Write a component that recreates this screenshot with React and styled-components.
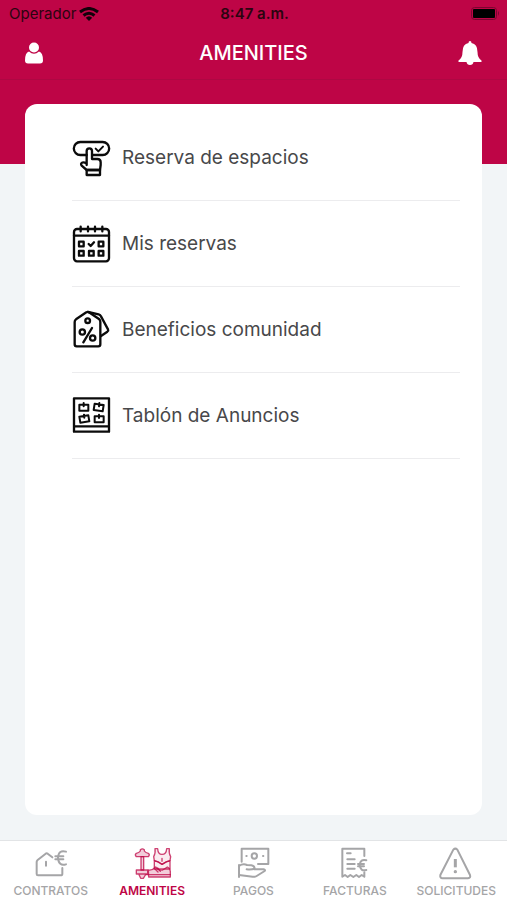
import React, { useState } from 'react';
import styled, { createGlobalStyle } from 'styled-components';

const RED = '#be0546';
const GREY = '#a5a5a7';

const GlobalStyle = createGlobalStyle`
    * {
        box-sizing: border-box;
    }
    body {
        margin: 0;
        font-family: Inter, "Liberation Sans", sans-serif;
        background-color: #f2f5f7;
    }
    button {
        border: 0;
        padding: 0;
        background: none;
        font: inherit;
        color: inherit;
        cursor: pointer;
    }
`;

const Screen = styled.div`
    display: flex;
    flex-direction: column;
    min-height: 100vh;
`;

const Header = styled.header`
    background-color: ${RED};
    border-bottom: 1px solid #ae0843;
`;

const StatusBar = styled.div`
    display: grid;
    grid-template-columns: 1fr auto 1fr;
    align-items: center;
    height: 27px;
    padding: 0 7px 0 9px;
    font-size: 15px;
    line-height: 18px;
    color: #2b0410;
`;

const Carrier = styled.span`
    display: flex;
    align-items: center;
    gap: 3px;
`;

const Clock = styled.time`
    font-weight: 600;
`;

const Battery = styled.svg`
    justify-self: end;
`;

const TitleBar = styled.div`
    display: grid;
    grid-template-columns: 1fr auto 1fr;
    align-items: center;
    height: 52px;
    padding: 0 24px;
`;

const Title = styled.h1`
    margin: 0;
    font-size: 20px;
    font-weight: 500;
    color: #fff;
`;

const IconButton = styled.button`
    display: flex;
    justify-self: ${({ side }) => side};
`;

const Main = styled.main`
    display: flex;
    flex: 1;
    padding: 24px 25px 25px;
    background: linear-gradient(${RED} 84px, #f2f5f7 84px);
`;

const Card = styled.section`
    flex: 1;
    padding: 11px 22px 11px 47px;
    border-radius: 12px;
    background-color: #fff;
`;

const Menu = styled.ul`
    margin: 0;
    padding: 0;
    list-style: none;
`;

const MenuItem = styled.li`
    border-bottom: 1px solid #ececee;
`;

const MenuButton = styled.button`
    display: flex;
    align-items: center;
    gap: 10px;
    width: 100%;
    height: 85px;
    font-size: 19px;
    text-align: left;
    color: #48484a;
`;

const LineIcon = styled.svg`
    flex: none;
    fill: none;
    stroke: currentColor;
    stroke-linecap: round;
    stroke-linejoin: round;
`;

const MenuIcon = styled(LineIcon).attrs({ width: 40, height: 40, 'aria-hidden': true })`
    color: #0b0b0b;
    stroke-width: 7;
`;

const TabIcon = styled(LineIcon).attrs({ width: 40, height: 36, 'aria-hidden': true })`
    stroke-width: 6;
`;

const TabBar = styled.nav`
    display: grid;
    grid-template-columns: repeat(5, 1fr);
    height: 60px;
    border-top: 1px solid #e2e4e6;
    background-color: #fff;
`;

const Tab = styled.button`
    display: flex;
    flex-direction: column;
    align-items: center;
    gap: 2px;
    padding-top: 4px;
    font-size: 12px;
    line-height: 16px;
    font-weight: ${({ active }) => active ? 600 : 500};
    color: ${({ active }) => active ? RED : GREY};
`;

const ReserveIcon = () => (
    <MenuIcon viewBox="36 24 120 120">
        <path d="M80 75H61a19.5 19.5 0 0 1 0-39h67a19.5 19.5 0 0 1 0 39H97" />
        <path d="M107 56l8 8 14-14" strokeWidth="6" />
        <path d="M80 105V63a8 8 0 0 1 16 0v24h16q10 0 10 10v8l-2 15H80L65 107q-4-6 1-9 4-3 14 2" />
        <path d="M80 120h40v15H80z" />
    </MenuIcon>
);

const CalendarIcon = () => (
    <MenuIcon viewBox="36 27 120 120">
        <rect x="42" y="42" width="105" height="97" rx="9" />
        <path d="M42 62h105M62 35v14M84 35v14M105 35v14M127 35v14" />
        <path d="M57 80h14v14H57zM116 80h14v14h-14zM57 108h14v14H57zM87 108h14v14H87zM116 108h14v14h-14z" />
        <path d="M86 87l6 6 10-11" />
    </MenuIcon>
);

const TagsIcon = () => (
    <MenuIcon viewBox="36 30 120 120">
        <path d="M79 37q4-3 8 0l31 21q3 3 3 8v67q0 6-6 6H50q-6 0-6-6V66q0-5 4-8z" />
        <path d="M84 36l32 7q5 1 7 6l21 39q2 4-2 7l-19 13" />
        <circle cx="83" cy="62" r="7" />
        <circle cx="67" cy="96" r="8" />
        <circle cx="98" cy="114" r="8" />
        <path d="M96 84l-26 43" />
    </MenuIcon>
);

const BoardIcon = () => (
    <MenuIcon viewBox="36 33 120 120">
        <path d="M42 40h105v100H42zM42 124h105" />
        <g strokeWidth="6">
            <path d="M58 59h27v18H58zM71 54v10" />
            <path d="M104 56l27 4-3 19-27-4zM118 54l-1 10" />
            <path d="M58 95l27-4 3 18-27 4zM72 89l1 9" />
            <path d="M104 94h27v18h-27zM117 89v10" />
        </g>
    </MenuIcon>
);

const ContractsIcon = () => (
    <TabIcon viewBox="92 45 120 108">
        <path d="M156 82l-14-11q-3-2-6 0l-25 20q-2 2-2 5v36q0 4 4 4h68q5 0 5-5v-17M137 95v12" />
        <path d="M197 65q-22-7-24 18 2 27 24 20M165 79h24M165 88h24" />
    </TabIcon>
);

const AmenitiesIcon = () => (
    <TabIcon viewBox="66 30 120 108">
        <g fill={RED} fillOpacity="0.2" strokeWidth="4" strokeOpacity="0.75">
            <path d="M91 48v-4q6-5 12 0v4q3 5 12 7 6 4 0 10H79q-6-6 0-10 9-2 12-7z" />
            <path d="M93 65h8v40h-8z" />
            <path d="M79 105h34v12H79zM86 117h22l-8 13h-8z" />
            <path d="M135 41h8q1 17 13 17 13 0 14-17h8q-2 15 4 24l-2 12q-10 2-24 11-13-9-23-11l-2-12q6-9 4-24z" fillOpacity="0.08" />
            <path d="M133 77q12 2 23 11 13-9 24-11v25h-47z" fillOpacity="0.08" />
            <path d="M115 105q12 2 22-9 9 12 21 9l14-9q8 3 9 13v17h-65z" />
            <path d="M108 119h73M135 102l9 9M143 99l8 10M156 70v9" />
        </g>
    </TabIcon>
);

const PaymentsIcon = () => (
    <TabIcon viewBox="100 45 120 108">
        <path d="M126 95V56h80v46h-31" />
        <circle cx="164" cy="78" r="8" />
        <path d="M140 78h1M190 78h1" />
        <path d="M118 105v36M118 108q12-8 24-3l13 1q9 1 10 9-8 5-24 3" />
        <path d="M163 118h29q6 1 3 5l-24 15q-5 3-12 2l-41-5" />
    </TabIcon>
);

const InvoicesIcon = () => (
    <TabIcon viewBox="405 45 120 108">
        <path d="M493 78V56h-66v84l8-5 8 6 8-6 9 6 9-6 8 6 8-6 8 5v-13" />
        <path d="M441 70h11M442 88h22M442 102h22M442 116h22" />
        <path d="M499 91q-18-5-20 14 2 20 20 15M474 102h18M474 109h18" />
    </TabIcon>
);

const RequestsIcon = () => (
    <TabIcon viewBox="169 135 120 108">
        <path d="M221 149q6-6 12 0l38 76q3 9-6 10h-76q-9-1-7-10z" />
        <path d="M227 177v25" strokeWidth="9" strokeLinecap="butt" />
        <circle cx="227" cy="215" r="2" fill="currentColor" />
    </TabIcon>
);

const menuItems = [
    { label: 'Reserva de espacios', Icon: ReserveIcon },
    { label: 'Mis reservas', Icon: CalendarIcon },
    { label: 'Beneficios comunidad', Icon: TagsIcon },
    { label: 'Tablón de Anuncios', Icon: BoardIcon },
];

const tabs = [
    { label: 'CONTRATOS', Icon: ContractsIcon },
    { label: 'AMENITIES', Icon: AmenitiesIcon },
    { label: 'PAGOS', Icon: PaymentsIcon },
    { label: 'FACTURAS', Icon: InvoicesIcon },
    { label: 'SOLICITUDES', Icon: RequestsIcon },
];

const App = () => {
    const [current, setCurrent] = useState('AMENITIES');

    return (
        <Screen>
            <GlobalStyle />
            <Header>
                <StatusBar>
                    <Carrier>
                        Operador
                        <svg width="20" height="14" viewBox="0 0 20 14" fill="none" stroke="#12020a" strokeWidth="3" aria-hidden="true">
                            <path d="M1 5q9-7 18 0M4.500 8.500q5.500-4.500 11 0" />
                            <path d="M6.800 10.800q3.200-3 6.400 0L10 14z" fill="#12020a" stroke="none" />
                        </svg>
                    </Carrier>
                    <Clock>8:47 a.m.</Clock>
                    <Battery width="29" height="14" viewBox="0 0 29 14" aria-hidden="true">
                        <rect x="0.500" y="0.500" width="25" height="12" rx="3" fill="none" stroke="#7c0530" />
                        <rect x="2" y="2" width="22" height="9" rx="1" fill="#000" />
                        <path d="M27 4q2 2 0 5z" fill="#7c0530" />
                    </Battery>
                </StatusBar>
                <TitleBar>
                    <IconButton side="start" aria-label="Perfil">
                        <svg width="20" height="22" viewBox="0 0 20 22" fill="#fff" aria-hidden="true">
                            <circle cx="10" cy="5.500" r="5" />
                            <path d="M5 9.500q5 4.500 10 0 4 1 4 9 0 3-3 3H4q-3 0-3-3 0-8 4-9z" />
                        </svg>
                    </IconButton>
                    <Title>AMENITIES</Title>
                    <IconButton side="end" aria-label="Notificaciones">
                        <svg width="26" height="26" viewBox="0 0 26 26" fill="#fff" aria-hidden="true">
                            <path d="M13 1q1.500 0 1.500 2 6 1 6 9 0 6 4 8.500v1.500h-8q-.5 3-3.500 3t-3.500-3h-8v-1.500q4-2.500 4-8.500 0-8 6-9 0-2 1.500-2z" />
                        </svg>
                    </IconButton>
                </TitleBar>
            </Header>
            <Main>
                <Card>
                    <Menu>
                        {menuItems.map(({ label, Icon }) => (
                            <MenuItem key={label}>
                                <MenuButton>
                                    <Icon />
                                    {label}
                                </MenuButton>
                            </MenuItem>
                        ))}
                    </Menu>
                </Card>
            </Main>
            <TabBar>
                {tabs.map(({ label, Icon }) => (
                    <Tab key={label} active={label === current ? 1 : 0} onClick={() => setCurrent(label)}>
                        <Icon />
                        {label}
                    </Tab>
                ))}
            </TabBar>
        </Screen>
    );
}

export default App
